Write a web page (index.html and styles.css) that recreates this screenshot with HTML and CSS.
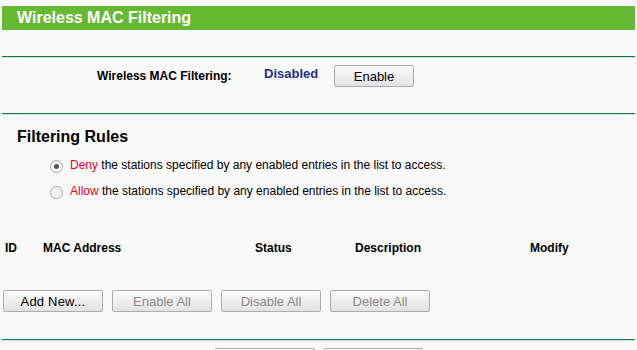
FILE: index.html
```html
<html>
  <head>
    <title>Wireless MAC Filtering</title>
    <link rel="stylesheet" href="styles.css">
  </head>
  <body>
    <div id="page">
      <div class="title">Wireless MAC Filtering</div>
      <div class="hr hr-first"></div>
      <div class="status-row">
        <span class="label">Wireless MAC Filtering:</span>
        <span class="state">Disabled</span>
        <button class="btn">Enable</button>
      </div>
      <div class="hr"></div>
      <div class="subtitle">Filtering Rules</div>
      <div class="rules">
        <label class="rule"><span class="radio checked"></span><span class="red">Deny</span>&nbsp;the stations specified by any enabled entries in the list to access.</label>
        <label class="rule"><span class="radio"></span><span class="red">Allow</span>&nbsp;the stations specified by any enabled entries in the list to access.</label>
      </div>
      <div class="thead">
        <span class="col-id">ID</span>
        <span class="col-mac">MAC Address</span>
        <span class="col-status">Status</span>
        <span class="col-desc">Description</span>
        <span class="col-mod">Modify</span>
      </div>
      <div class="actions">
        <button class="btn wide">Add New...</button>
        <button class="btn wide" disabled>Enable All</button>
        <button class="btn wide" disabled>Disable All</button>
        <button class="btn wide" disabled>Delete All</button>
      </div>
      <div class="hr hr-last"></div>
      <div class="paging">
        <button class="btn wide">Previous</button>
        <button class="btn wide">Next</button>
      </div>
    </div>
  </body>
</html>
```
FILE: styles.css
```css
html{
  height:100%;
}
body{
  margin:0;
  height:100%;
  background:#f9f9f9;
  color:#000;
  font-family:"Liberation Sans", Arial, sans-serif;
  font-size:12px;
  overflow:hidden;
}
#page{
  margin:0 2px;
  padding-top:6px;
}
.title{
  height:24px;
  line-height:24px;
  background:#66b933;
  color:#fff;
  font-size:16px;
  font-weight:bold;
  padding-left:15px;
}
.hr{
  height:1px;
  border-top:1px solid #137a3c;
  background:#cfe6d6;
}
.hr-first{
  margin-top:26px;
}
.status-row{
  display:flex;
  align-items:flex-start;
  height:55px;
  padding:7px 0 0 95px;
  box-sizing:border-box;
}
.label{
  font-weight:bold;
  width:167px;
  line-height:22px;
}
.state{
  font-weight:bold;
  color:#1c2f8c;
  width:70px;
  font-size:13px;
  line-height:22px;
  margin-top:-2px;
}
.btn{
  height:22px;
  width:80px;
  padding:0;
  border:1px solid #adadad;
  border-radius:2px;
  background:linear-gradient(#fbfbfb, #e2e2e2);
  font-family:"Liberation Sans", Arial, sans-serif;
  font-size:13px;
  color:#000;
}
.btn[disabled]{
  color:#8a8a8a;
}
.btn.wide{
  width:100px;
}
.subtitle{
  font-size:16px;
  font-weight:bold;
  padding-left:15px;
  margin-top:13px;
  height:20px;
}
.rules{
  padding-left:48px;
  margin-top:4px;
}
.rule{
  display:flex;
  align-items:center;
  height:26px;
}
.radio{
  width:11px;
  height:11px;
  border:1px solid #a6a6a6;
  border-radius:50%;
  background:linear-gradient(#ededed, #fdfdfd);
  margin-right:7px;
  margin-top:2px;
  position:relative;
}
.radio.checked::after{
  content:"";
  position:absolute;
  left:3px;
  top:3px;
  width:5px;
  height:5px;
  border-radius:50%;
  background:#555;
}
.red{
  color:#f0002a;
}
.thead{
  display:flex;
  font-weight:bold;
  margin-top:37px;
  height:16px;
}
.col-id{ width:38px; padding-left:3px; }
.col-mac{ width:212px; }
.col-status{ width:100px; }
.col-desc{ width:175px; }
.actions{
  display:flex;
  gap:9px;
  margin-top:33px;
  padding-left:1px;
}
.btn.wide:first-child{
  letter-spacing:0.2px;
}
.hr-last{
  margin-top:27px;
}
.paging{
  display:flex;
  gap:8px;
  padding-left:213px;
  margin-top:7px;
}
```
